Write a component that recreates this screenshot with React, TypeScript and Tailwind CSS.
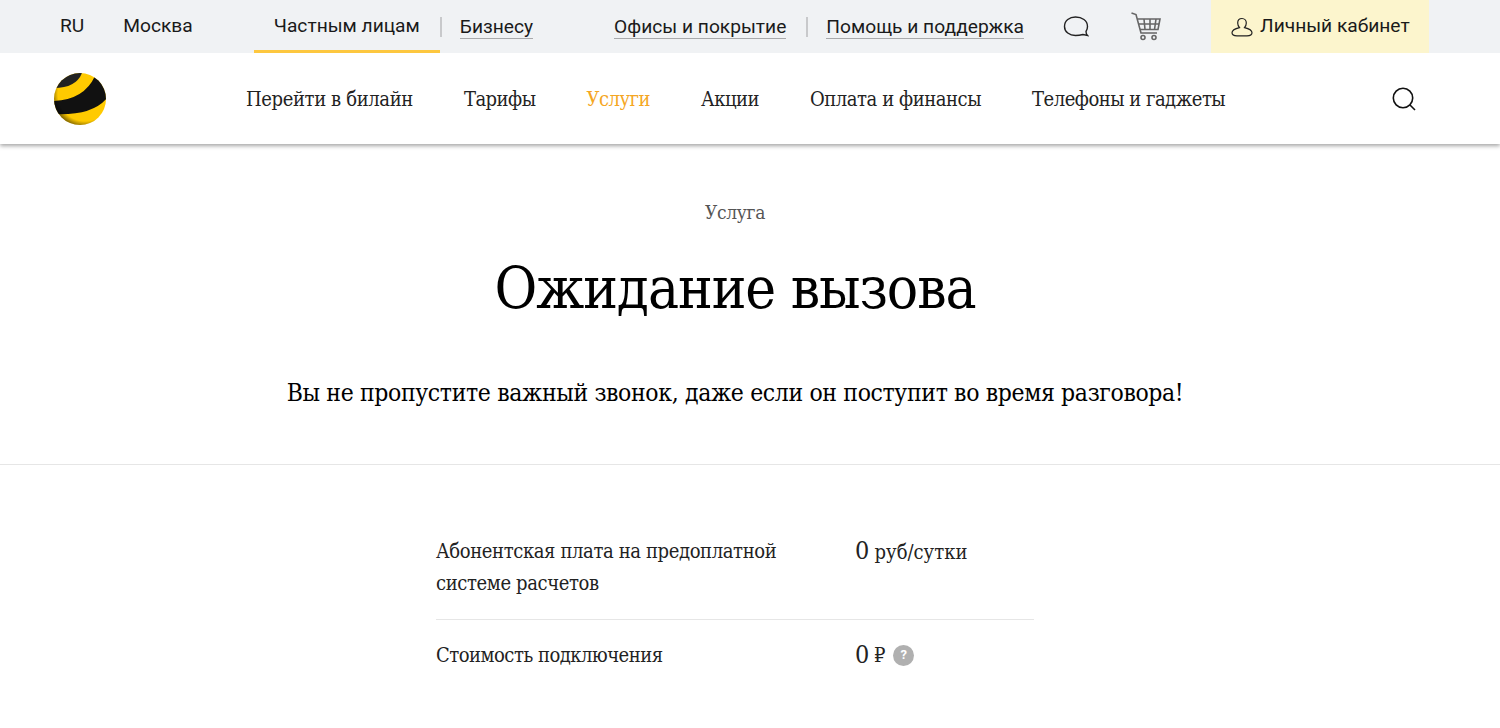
export default function App() {
  return (
    <div className="w-[1500px] h-[728px] overflow-hidden bg-white text-black font-['DejaVu_Serif_Condensed','DejaVu_Serif',serif]">
      <div className="relative z-10 h-[53px] bg-[#f0f2f4] flex items-stretch font-['Roboto',sans-serif] text-[19.2px] text-[#1a1a1a] pl-[60px]">
        <span className="self-center">RU</span>
        <span className="self-center ml-[39px]">Москва</span>
        <div className="ml-[61px] w-[186px] pt-[2px] flex items-center justify-center border-b-[3px] border-[#fdc73f]">Частным лицам</div>
        <div className="self-center w-[2px] h-[20px] bg-[#c8c9cb]" />
        <span className="self-center ml-[18px] mt-[1px] border-b border-[#a8a9ab] leading-[22px]">Бизнесу</span>
        <span className="self-center ml-[81px] mt-[1px] border-b border-[#a8a9ab] leading-[22px]">Офисы и покрытие</span>
        <div className="self-center ml-[20px] w-[2px] h-[20px] bg-[#c8c9cb]" />
        <span className="self-center ml-[18px] mt-[1px] border-b border-[#a8a9ab] leading-[22px]">Помощь и поддержка</span>
        <svg className="self-center ml-[39px]" width="26" height="24" viewBox="0 0 26 24" fill="none" stroke="#222" strokeWidth="1.4">
          <path d="M12.5 2C6.5 2 1.5 5.5 1.5 11.5C1.5 17 6.5 20.5 12.5 20.5C15 20.5 18 20 20 19.5L24.5 20.5C23 19 23 18 23 16.5C24 15 24.5 13.5 24.5 11.5C24.5 5.5 19 2 12.5 2Z" />
        </svg>
        <svg className="self-center ml-[42px]" width="30" height="29" viewBox="0 0 30 29" fill="none" stroke="#666" strokeWidth="1.6">
          <path d="M0.5 1L5 2.5L10 21H26" />
          <path d="M6.5 7H29L27 17.5H9" />
          <path d="M13 7L14 17.5M19 7V17.5M25 7L23.5 17.5M7.5 12H28" />
          <circle cx="12" cy="25.5" r="2" />
          <circle cx="23" cy="25.5" r="2" />
        </svg>
        <div className="ml-[50px] w-[218px] bg-[#fcf5cd] flex items-center pl-[20px] gap-[7px]">
          <svg width="22" height="20" viewBox="0 0 22 20" fill="none" stroke="#222" strokeWidth="1.2">
            <path d="M11 1.5C8.3 1.5 6.7 3.6 6.7 6C6.7 8 7.5 9.5 8.5 10.7C5 11.5 1 13 1 15.8C1 18 3 18.8 6 18.8H16C19 18.8 21 18 21 15.8C21 13 17 11.5 13.5 10.7C14.5 9.5 15.3 8 15.3 6C15.3 3.6 13.7 1.5 11 1.5Z" />
          </svg>
          <span>Личный кабинет</span>
        </div>
      </div>
      <div className="relative h-[91px] bg-white shadow-[0_2px_4px_0_rgba(0,0,0,0.35)] flex items-center pl-[54px] text-[20px] tracking-[-0.5px] text-[#222]">
        <svg width="52" height="52" viewBox="0 0 52 52">
          <defs>
            <clipPath id="ball"><circle cx="26" cy="26" r="26" /></clipPath>
            <radialGradient id="shade" cx="0.6" cy="0.4" r="0.64">
              <stop offset="0.82" stopColor="#000" stopOpacity="0" />
              <stop offset="1" stopColor="#000" stopOpacity="0.5" />
            </radialGradient>
          </defs>
          <g clipPath="url(#ball)">
            <rect width="52" height="52" fill="#ffca00" />
            <path d="M0 15Q22 15 28 0L0 0Z" fill="#222" />
            <path d="M-1 28Q30 27 41 3L53 12V25Q38 43 -1 41Z" fill="#111" />
            <rect width="52" height="52" fill="url(#shade)" />
          </g>
        </svg>
        <div className="ml-[140px] flex gap-[51px]">
          <span className="tracking-[-0.38px]">Перейти в билайн</span>
          <span>Тарифы</span>
          <span className="text-[#f5a623]">Услуги</span>
          <span>Акции</span>
          <span className="tracking-[-0.44px]">Оплата и финансы</span>
          <span>Телефоны и гаджеты</span>
        </div>
        <svg className="ml-[167px]" width="24" height="24" viewBox="0 0 24 24" fill="none" stroke="#111" strokeWidth="1.6">
          <circle cx="11" cy="11" r="9.7" />
          <path d="M18 18L23 23" />
        </svg>
      </div>
      <div className="w-[1470px] flex flex-col items-center">
        <div className="mt-[55px] text-[19px] tracking-[-0.3px] leading-[26px] text-[#555]">Услуга</div>
        <h1 className="mt-[28px] text-[58px] tracking-[-1.07px] leading-[70px] font-normal text-black">Ожидание вызова</h1>
        <p className="mt-[52px] text-[24.5px] tracking-[-0.36px] leading-[36px]">Вы не пропустите важный звонок, даже если он поступит во время разговора!</p>
      </div>
      <div className="mt-[53px] h-px bg-[#e6e6e6]" />
      <div className="w-[1470px] flex flex-col items-center">
        <div className="w-[598px] mt-[70px] text-[20px] tracking-[-0.38px] leading-[32px] text-[#222]">
          <div className="flex border-b border-[#e6e6e6] pb-[20px]">
            <div className="w-[419px] pr-[40px]">Абонентская плата на предоплатной системе расчетов</div>
            <div className="tracking-normal"><span className="text-[25px] tracking-[-0.5px]">0</span> руб/сутки</div>
          </div>
          <div className="flex pt-[19px]">
            <div className="w-[419px] tracking-[-0.5px]">Стоимость подключения</div>
            <div className="flex items-center">
              <span className="text-[25px]">0</span>
              <span className="ml-[5px]">₽</span>
              <span className="ml-[8px] w-[21px] h-[21px] rounded-full bg-[#b0b0b0] text-white text-[13px] font-bold flex items-center justify-center font-['Roboto',sans-serif]">?</span>
            </div>
          </div>
        </div>
      </div>
    </div>
  );
}
